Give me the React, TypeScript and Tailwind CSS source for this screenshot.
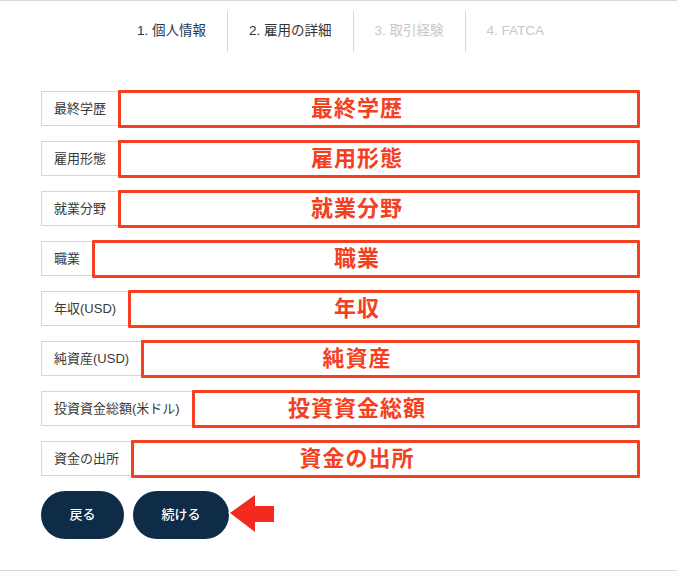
const FONT = '"Liberation Sans", "Noto Sans CJK JP", sans-serif';

const STEPS = [
  { label: '1. 個人情報', color: 'text-[#1f3957]' },
  { label: '2. 雇用の詳細', color: 'text-[#333333]' },
  { label: '3. 取引経験', color: 'text-[#c4c8cc]' },
  { label: '4. FATCA', color: 'text-[#c4c8cc]' },
];

const FIELDS = [
  '最終学歴',
  '雇用形態',
  '就業分野',
  '職業',
  '年収(USD)',
  '純資産(USD)',
  '投資資金総額(米ドル)',
  '資金の出所',
];

function annotation(label: string) {
  return label.replace(/\(.*\)$/, '');
}

function Arrow() {
  return (
    <svg
      className="absolute left-[226px] top-0"
      width="52"
      height="46"
      viewBox="0 0 52 46"
    >
      <path
        d="M4 22 L29 4 L29 15 L48 15 L48 31 L29 31 L29 41 Z"
        fill="#f52a1f"
        stroke="#ffffff"
        strokeWidth="3"
        strokeLinejoin="round"
        paintOrder="stroke"
      />
    </svg>
  );
}

export default function App() {
  return (
    <div
      className="w-[677px] h-[571px] bg-white border-t border-b border-[#d3d9df] box-border"
      style={{ fontFamily: FONT }}
    >
      {/* Step navigation */}
      <nav className="flex justify-center pt-[10px] pl-[4px]">
        {STEPS.map((step, i) => (
          <div
            key={step.label}
            className={`h-[41px] px-[21px] flex items-center text-[13.5px] ${step.color} ${
              i > 0 ? 'border-l border-[#d6d9dc]' : ''
            }`}
          >
            {step.label}
          </div>
        ))}
      </nav>

      {/* Form rows */}
      <div className="pl-[41px] pr-[39px] mt-[39px] flex flex-col gap-[15px]">
        {FIELDS.map((label) => (
          <div key={label} className="relative flex h-[35px]">
            <div className="h-full px-[12px] flex items-center border border-[#d3d7dd] text-[13px] text-[#3a3a3a] whitespace-nowrap">
              {label}
            </div>
            <div className="relative flex-1 border border-l-0 border-[#d3d7dd]">
              <div className="absolute -top-[2px] -bottom-[3px] -left-px -right-[3px] border-[3px] border-[#f4401f] rounded-[1px]" />
            </div>
            <div className="absolute inset-y-0 left-0 w-[632px] flex items-center justify-center pointer-events-none">
              <span className="text-[22px] font-bold text-[#f4401f] tracking-[1px]">
                {annotation(label)}
              </span>
            </div>
          </div>
        ))}
      </div>

      {/* Buttons */}
      <div className="relative flex gap-[9px] pl-[41px] mt-[15px]">
        <button className="w-[83px] h-[48px] rounded-full bg-[#0e2c47] text-white text-[13px] font-medium">
          戻る
        </button>
        <button className="w-[96px] h-[48px] rounded-full bg-[#0e2c47] text-white text-[13px] font-medium">
          続ける
        </button>
        <Arrow />
      </div>
    </div>
  );
}
